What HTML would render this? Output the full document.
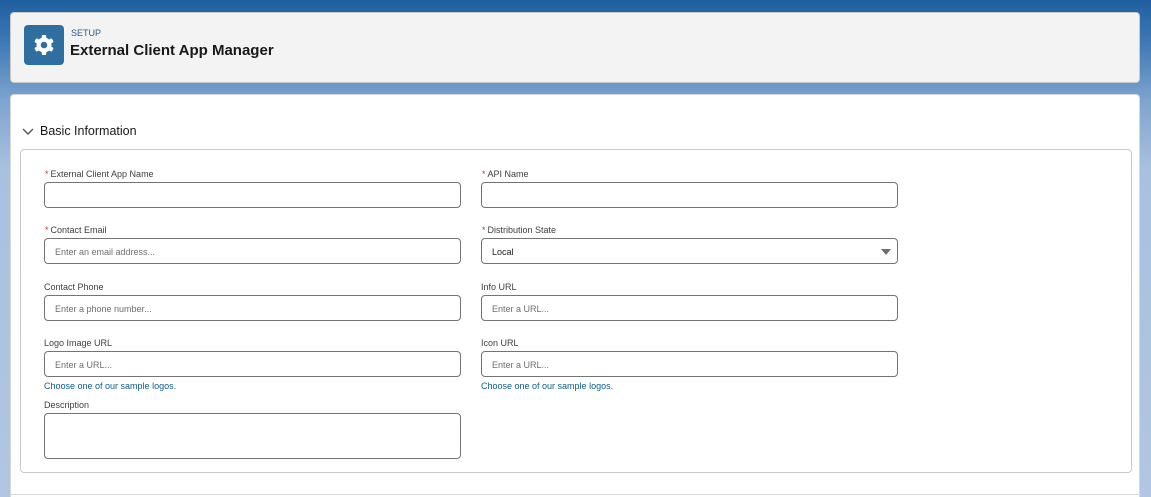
<!DOCTYPE html>
<html style="width:1151px;height:497px;overflow:hidden"><head><style>
*{box-sizing:border-box;margin:0;padding:0}
body{width:1151px;height:497px;overflow:hidden;font-family:"Liberation Sans",sans-serif;background:linear-gradient(180deg,#1f5f9f 0px,#3b78b4 40px,#7da3cf 100px,#a9c1df 170px,#b0c6e2 497px);position:relative}
.hdr{position:absolute;left:10px;top:12px;width:1130px;height:71px;background:#f3f3f3;border:1px solid #c9c9c9;border-radius:4px}
.ic{position:absolute;left:13px;top:12px;width:40px;height:40px;background:#2f6f9f;border-radius:4px}
.setup{position:absolute;left:60px;top:15px;font-size:9px;color:#2e5a88}
.title{position:absolute;left:59px;top:29px;font-size:15px;font-weight:bold;color:#181818}
.main{position:absolute;left:10px;top:94px;width:1130px;height:410px;background:#fff;border:1px solid #d8d8d8;border-radius:4px}
.sec{position:absolute;left:29px;top:29px;font-size:12.5px;color:#181818}
.chev{position:absolute;left:11px;top:33px}
.fs{position:absolute;left:9px;top:54px;width:1112px;height:324px;border:1px solid #c9c9c9;border-radius:4px}
.lbl{position:absolute;font-size:9px;color:#3e3e3c}
.lbl b{color:#c23934;font-weight:normal;margin-right:2px}
.in{position:absolute;width:417px;height:26px;border:1px solid #747474;border-radius:4px;font-size:9px;color:#706e6b;padding:8px 0 0 10px}
.help{position:absolute;font-size:9px;color:#0b5c8c}
.hr{position:absolute;left:0;top:399px;width:1130px;border-top:1px solid #d8d8d8}
</style></head><body>
<div class="hdr">
<div class="ic"><svg width="40" height="40" viewBox="0 0 40 40"><g fill="#fff" transform="translate(20,20)"><circle r="7.5"/><rect x="-2.2" y="-10" width="4.4" height="20" rx="1"/><rect x="-2.2" y="-10" width="4.4" height="20" rx="1" transform="rotate(60)"/><rect x="-2.2" y="-10" width="4.4" height="20" rx="1" transform="rotate(120)"/></g><circle cx="20" cy="20" r="3.3" fill="#2f6f9f"/></svg></div>
<div class="setup">SETUP</div>
<div class="title">External Client App Manager</div>
</div>
<div class="main">
<svg class="chev" width="12" height="8" viewBox="0 0 12 8"><path d="M1 1l5 5 5-5" stroke="#555" stroke-width="1.4" fill="none"/></svg>
<div class="sec">Basic Information</div>
<div class="fs"></div>
<div class="hr"></div>
</div>
<div class="lbl" style="left:45px;top:169px"><b>*</b>External Client App Name</div>
<div class="in" style="left:44px;top:182px"></div>
<div class="lbl" style="left:482px;top:169px"><b>*</b>API Name</div>
<div class="in" style="left:481px;top:182px"></div>
<div class="lbl" style="left:45px;top:225px"><b>*</b>Contact Email</div>
<div class="in" style="left:44px;top:238px">Enter an email address...</div>
<div class="lbl" style="left:482px;top:225px"><b>*</b>Distribution State</div>
<div class="in" style="left:481px;top:238px;color:#181818">Local<svg style="position:absolute;right:6px;top:10px" width="10" height="6"><path d="M0 0h10L5 6z" fill="#706e6b"/></svg></div>
<div class="lbl" style="left:44px;top:282px">Contact Phone</div>
<div class="in" style="left:44px;top:295px">Enter a phone number...</div>
<div class="lbl" style="left:481px;top:282px">Info URL</div>
<div class="in" style="left:481px;top:295px">Enter a URL...</div>
<div class="lbl" style="left:44px;top:338px">Logo Image URL</div>
<div class="in" style="left:44px;top:351px">Enter a URL...</div>
<div class="lbl" style="left:481px;top:338px">Icon URL</div>
<div class="in" style="left:481px;top:351px">Enter a URL...</div>
<div class="help" style="left:44px;top:381px">Choose one of our sample logos.</div>
<div class="help" style="left:481px;top:381px">Choose one of our sample logos.</div>
<div class="lbl" style="left:44px;top:400px">Description</div>
<div class="in" style="left:44px;top:413px;height:46px"></div>
</body></html>
